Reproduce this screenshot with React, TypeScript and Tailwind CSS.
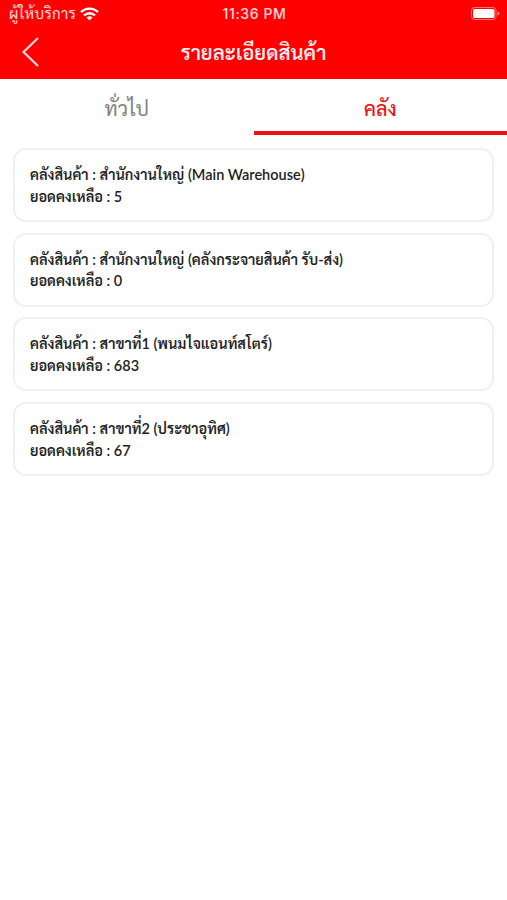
type Stock = {
  warehouse: string;
  balance: number;
};

const stocks: Stock[] = [
  { warehouse: "สำนักงานใหญ่ (Main Warehouse)", balance: 5 },
  { warehouse: "สำนักงานใหญ่ (คลังกระจายสินค้า รับ-ส่ง)", balance: 0 },
  { warehouse: "สาขาที่1 (พนมไจแอนท์สโตร์)", balance: 683 },
  { warehouse: "สาขาที่2 (ประชาอุทิศ)", balance: 67 },
];

function StatusBar() {
  return (
    <div className="grid h-[27px] grid-cols-3 items-center pr-[7px] pl-[9px] text-white/85">
      <div className="flex items-center gap-[4px]">
        <span className="text-[15px] tracking-[0.3px] whitespace-nowrap">ผู้ให้บริการ</span>
        <svg className="shrink-0" width="19" height="14" viewBox="0 0 19 14" fill="none" stroke="white" strokeWidth="2.4">
          <path d="M1 5.2a12 12 0 0 1 17 0" />
          <path d="M4 8.5a7.8 7.8 0 0 1 11 0" />
          <path d="M9.5 13.5 6.5 10.5a4.2 4.2 0 0 1 6 0Z" fill="white" stroke="none" />
        </svg>
      </div>
      <span className="text-center font-['Inter',sans-serif] text-[14px] font-medium tracking-[0.6px]">11:36 PM</span>
      <svg className="justify-self-end" width="29" height="13" viewBox="0 0 29 13">
        <rect x="0.5" y="0.5" width="24.5" height="12" rx="3" fill="none" stroke="white" strokeOpacity="0.45" />
        <rect x="2" y="2" width="21.5" height="9" rx="1.5" fill="white" />
        <path d="M26.5 4.5v4a2 2 0 0 0 0-4Z" fill="white" fillOpacity="0.5" />
      </svg>
    </div>
  );
}

export default function App() {
  return (
    <div className="min-h-[900px] bg-white font-['Lato','Sarabun','Noto_Sans_Thai_Looped','Noto_Sans_Thai',sans-serif]">
      <header className="h-[79px] bg-[#ff0000]">
        <StatusBar />
        <div className="grid h-[50px] grid-cols-[60px_1fr_60px] items-center text-white">
          <svg className="ml-[21px]" width="19" height="32" viewBox="0 0 19 32" fill="none" stroke="currentColor" strokeOpacity="0.85" strokeWidth="2.2">
            <path d="M17 2 2.5 16 17 30" />
          </svg>
          <h1 className="text-center text-[20.3px] font-semibold text-white/95">รายละเอียดสินค้า</h1>
        </div>
      </header>
      <nav className="grid h-14 grid-cols-2">
        <button className="pt-[2px] text-[20px] text-[#808080]">ทั่วไป</button>
        <button className="border-b-4 border-[#ee1010] pt-[7px] text-[19.5px] font-medium text-[#ee1010]">คลัง</button>
      </nav>
      <main className="flex flex-col gap-[10.7px] px-[13px] pt-[13px]">
        {stocks.map((stock) => (
          <section
            key={stock.warehouse}
            className="h-[74px] rounded-[13px] border-2 border-[#f0f0f0] px-[15px] pt-[14px] text-[14.5px] leading-[21.7px] font-semibold text-[#222]"
          >
            <p>คลังสินค้า : {stock.warehouse}</p>
            <p>ยอดคงเหลือ : {stock.balance}</p>
          </section>
        ))}
      </main>
    </div>
  );
}
